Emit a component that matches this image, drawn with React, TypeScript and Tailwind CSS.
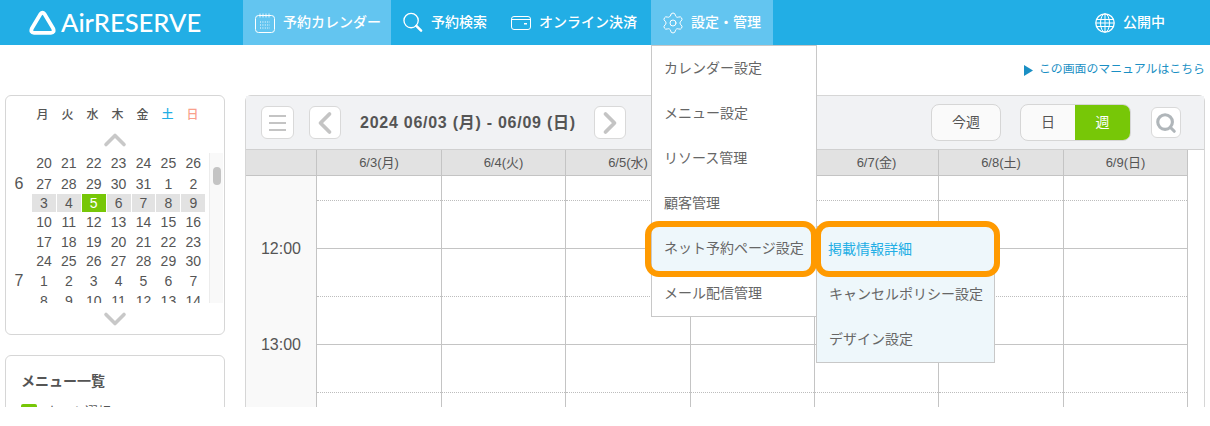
import { ChevronDown, ChevronLeft, ChevronRight, ChevronUp, Search, Settings } from "lucide-react";

const font = "font-['Liberation_Sans','Noto_Sans_CJK_JP',sans-serif]";

const weekDays = [
  { label: "月", color: "text-[#555]" },
  { label: "火", color: "text-[#555]" },
  { label: "水", color: "text-[#555]" },
  { label: "木", color: "text-[#555]" },
  { label: "金", color: "text-[#555]" },
  { label: "土", color: "text-[#22aee5]" },
  { label: "日", color: "text-[#f9a08c]" }
];

const calendarRows = [
  { month: "", h: "h-[20px]", days: [20, 21, 22, 23, 24, 25, 26] },
  { month: "6", h: "h-[21px]", days: [27, 28, 29, 30, 31, 1, 2] },
  { month: "", h: "h-[18px]", days: [3, 4, 5, 6, 7, 8, 9], current: true },
  { month: "", h: "h-[20px]", days: [10, 11, 12, 13, 14, 15, 16] },
  { month: "", h: "h-[19px]", days: [17, 18, 19, 20, 21, 22, 23] },
  { month: "", h: "h-[19px]", days: [24, 25, 26, 27, 28, 29, 30] },
  { month: "7", h: "h-[21px]", days: [1, 2, 3, 4, 5, 6, 7] },
  { month: "", h: "h-[19px]", days: [8, 9, 10, 11, 12, 13, 14] }
];

const columns = [
  { label: "6/3(月)", w: "w-[125px]" },
  { label: "6/4(火)", w: "w-[124px]" },
  { label: "6/5(水)", w: "w-[125px]" },
  { label: "6/6(木)", w: "w-[124px]" },
  { label: "6/7(金)", w: "w-[124px]" },
  { label: "6/8(土)", w: "w-[125px]" },
  { label: "6/9(日)", w: "w-[124px]" }
];

const settingsItems = ["カレンダー設定", "メニュー設定", "リソース管理", "顧客管理", "ネット予約ページ設定", "メール配信管理"];

function CalendarIcon() {
  return (
    <svg width="20" height="20" viewBox="0 0 20 20" fill="none" stroke="white" strokeWidth="1">
      <rect x="0.5" y="2.5" width="19" height="17" rx="3" />
      <path d="M5 0.5v4M8 0.5v4M11 0.5v4M14 0.5v4" strokeWidth="0.8" />
      <path d="M5 9h10M5 12h10M5 15h10" strokeWidth="1.2" strokeDasharray="1 1.4" />
    </svg>
  );
}

function CardIcon() {
  return (
    <svg width="20" height="14" viewBox="0 0 20 14" fill="none" stroke="white" strokeWidth="1">
      <rect x="0.5" y="0.5" width="19" height="13" rx="2.5" />
      <path d="M0.5 3.5h19" />
      <rect x="13" y="7" width="3" height="1.5" fill="white" stroke="none" />
    </svg>
  );
}

function SearchIcon() {
  return (
    <svg width="21" height="21" viewBox="0 0 21 21" fill="none" stroke="white">
      <circle cx="8.5" cy="8.5" r="7.5" strokeWidth="1.4" />
      <path d="M14 14l5 5" strokeWidth="2.6" strokeLinecap="round" />
    </svg>
  );
}

function GlobeIcon() {
  return (
    <svg width="20" height="20" viewBox="0 0 20 20" fill="none" stroke="white" strokeWidth="1">
      <circle cx="10" cy="10" r="9.2" strokeWidth="1.3" />
      <ellipse cx="10" cy="10" rx="4.5" ry="9.2" />
      <path d="M10 1v18M1.5 6.5h17M1 10h18M1.5 13.5h17" />
    </svg>
  );
}

function NavItem({ icon, label, active, className }: { icon: React.ReactNode; label: string; active?: boolean; className: string }) {
  return (
    <div className={`flex h-full items-center ${active ? "bg-[#63c5f0]" : ""} ${className}`}>
      <span className="flex w-5 shrink-0 justify-center">{icon}</span>
      <span className="ml-2 whitespace-nowrap text-[14px] font-medium text-white">{label}</span>
    </div>
  );
}

function ToolButton({ children, className }: { children: React.ReactNode; className: string }) {
  return (
    <div className={`flex items-center justify-center rounded-md border border-[#d9d9d9] bg-white text-[#c4c4c4] ${className}`}>
      {children}
    </div>
  );
}

function MiniCalendar() {
  return (
    <div className="h-[240px] rounded-md border border-[#d6d6d6] bg-white">
      <div className="flex h-[37px] pl-[24px] pt-[11px]">
        {weekDays.map((d) => (
          <span key={d.label} className={`w-[25px] text-center text-[12px] font-medium leading-[16px] ${d.color}`}>
            {d.label}
          </span>
        ))}
      </div>
      <div className="flex h-[20px] items-center justify-center pb-[6px]">
        <ChevronUp size={36} strokeWidth={2.4} className="shrink-0 text-[#c8c8c8]" />
      </div>
      <div className="flex h-[150px] overflow-hidden">
        <div className="w-[203px] shrink-0 overflow-hidden">
          {calendarRows.map((row, i) => (
            <div key={i} className={`flex items-center ${row.h}`}>
              <span className="w-[26px] text-center text-[16px] leading-none text-[#555]">{row.month}</span>
              {row.days.map((day, j) => {
                const today = row.current && day === 5;
                return (
                  <span
                    key={j}
                    className={`mr-px flex h-[18px] w-[23.9px] items-center justify-center text-[14px] leading-none ${
                      today ? "bg-[#77c707] text-white" : row.current ? "bg-[#e2e2e2] text-[#555]" : "text-[#555]"
                    }`}
                  >
                    {day}
                  </span>
                );
              })}
            </div>
          ))}
        </div>
        <div className="w-[14px] border-l border-[#ececec] bg-[#f9f9f9] pl-[3px] pt-[14px]">
          <div className="h-[18px] w-[8px] rounded-[4px] bg-[#c4c4c4]" />
        </div>
      </div>
      <div className="flex justify-center">
        <ChevronDown size={36} strokeWidth={2.4} className="-mt-[2px] shrink-0 text-[#c8c8c8]" />
      </div>
    </div>
  );
}

function Toolbar() {
  return (
    <div className="flex h-[54px] items-center border-b border-[#d0d0d0] bg-[#f1f2f4] pl-[15px] pr-[23px]">
      <ToolButton className="h-[33px] w-[33px] border-[#cfcfcf] bg-[#eeeeee]">
        <div className="flex w-[17px] flex-col gap-[5px]">
          <span className="h-[2px] bg-[#c4c4c4]" />
          <span className="h-[2px] bg-[#c4c4c4]" />
          <span className="h-[2px] bg-[#c4c4c4]" />
        </div>
      </ToolButton>
      <ToolButton className="ml-[15px] h-[33px] w-[32px]">
        <ChevronLeft size={36} strokeWidth={2.5} className="shrink-0" />
      </ToolButton>
      <span className="ml-[19px] w-[214px] whitespace-nowrap text-[16px] font-bold tracking-[0.74px] text-[#555]">
        2024 06/03 (月) - 06/09 (日)
      </span>
      <ToolButton className="ml-[20px] h-[33px] w-[32px]">
        <ChevronRight size={36} strokeWidth={2.5} className="shrink-0" />
      </ToolButton>
      <div className="ml-auto flex h-[37px] w-[70px] items-center justify-center rounded-lg border border-[#d6d6d6] bg-[#fafafa] text-[14px] text-[#555]">
        今週
      </div>
      <div className="ml-[19px] flex h-[37px] w-[111px] overflow-hidden rounded-lg border border-[#d6d6d6] bg-[#fafafa] text-[14px]">
        <span className="flex flex-1 items-center justify-center text-[#555]">日</span>
        <span className="flex w-[55px] items-center justify-center bg-[#77c707] text-white">週</span>
      </div>
      <ToolButton className="ml-[20px] h-[31px] w-[30px]">
        <Search size={22} strokeWidth={3.4} className="text-[#b0b6ba]" />
      </ToolButton>
    </div>
  );
}

function WeekGrid() {
  return (
    <div className="flex">
      <div className="w-[71px] shrink-0 border-r border-[#c4c4c4] bg-[#f9f9f9]">
        <div className="h-[26px] border-b border-[#c4c4c4] bg-[#e2e2e2]" />
        <div className="h-[24px]" />
        <div className="flex h-[96px] items-center justify-center pt-[2px] text-[16px] text-[#555]">12:00</div>
        <div className="flex h-[96px] items-center justify-center pt-[2px] text-[16px] text-[#555]">13:00</div>
      </div>
      {columns.map((col) => (
        <div key={col.label} className={`shrink-0 border-r border-[#c4c4c4] ${col.w}`}>
          <div className="flex h-[26px] items-center justify-center border-b border-[#c4c4c4] bg-[#e2e2e2] text-[13px] text-[#555]">
            {col.label}
          </div>
          <div className="h-[25px] border-b border-dotted border-[#bdbdbd]" />
          <div className="h-[48px] border-b border-[#c4c4c4]" />
          <div className="h-[48px] border-b border-dotted border-[#bdbdbd]" />
          <div className="h-[48px] border-b border-[#c4c4c4]" />
          <div className="h-[48px] border-b border-dotted border-[#bdbdbd]" />
          <div className="h-[48px]" />
        </div>
      ))}
    </div>
  );
}

export default function App() {
  return (
    <div className={`h-[426px] w-[1210px] overflow-hidden bg-white ${font}`}>
      <div className="relative h-[407px] overflow-hidden">
        <header className="flex h-[45px] items-center bg-[#22aee5]">
          <div className="flex w-[243px] items-center pl-[29px]">
            <svg width="27" height="25" viewBox="0 0 27 25" fill="none" stroke="white" strokeWidth="3.8" strokeLinejoin="round">
              <path d="M11.5 4 Q13.5 1.5 15.5 4 L24.2 18.5 Q25.8 22.8 22 22.8 H5 Q1.2 22.8 2.8 18.5 Z" />
            </svg>
            <span className="ml-[5px] whitespace-nowrap font-['Lato',sans-serif] text-[25.6px] font-medium leading-none text-white">
              AirRESERVE
            </span>
          </div>
          <NavItem icon={<CalendarIcon />} label="予約カレンダー" active className="w-[148px] pl-[12px]" />
          <NavItem icon={<SearchIcon />} label="予約検索" className="w-[120px] pl-[12px]" />
          <NavItem icon={<CardIcon />} label="オンライン決済" className="w-[140px]" />
          <NavItem icon={<Settings size={24} strokeWidth={1} color="white" className="shrink-0" />} label="設定・管理" active className="w-[122px] pl-[12px]" />
          <div className="ml-[322px]">
            <NavItem icon={<GlobeIcon />} label="公開中" className="w-[90px]" />
          </div>
        </header>

        <div className="flex h-[50px] items-center justify-end pr-[5px] text-[11.9px] text-[#1a8fc4]">
          <svg width="9" height="11" viewBox="0 0 9 11" className="mr-[6px]" fill="#1a8fc4">
            <path d="M0 0L9 5.5L0 11Z" />
          </svg>
          この画面のマニュアルはこちら
        </div>

        <div className="flex gap-[20px] pl-[5px]">
          <aside className="w-[220px] shrink-0">
            <MiniCalendar />
            <div className="mt-[20px] h-[120px] rounded-md border border-[#d6d6d6] bg-white px-[15px] pt-[15px]">
              <p className="text-[14px] font-bold leading-[20px] text-[#555]">メニュー一覧</p>
              <div className="mt-[11px] flex items-center gap-[9px]">
                <span className="h-[16px] w-[16px] rounded-[2px] bg-[#77c707]" />
                <span className="text-[13px] text-[#555]">カット選択</span>
              </div>
            </div>
          </aside>
          <main className="h-[400px] w-[960px] shrink-0 rounded-t-md border border-[#d6d6d6] bg-white">
            <Toolbar />
            <WeekGrid />
          </main>
        </div>

        {/* 設定・管理 dropdown */}
        <div className="absolute left-[651px] top-[45px] w-[166px] border border-[#c8c8c8] bg-white">
          {settingsItems.map((item, i) => (
            <div key={item} className={`flex h-[45px] items-center whitespace-nowrap pl-[12px] text-[14px] text-[#666] ${i === 4 ? "bg-[#eef7fb]" : ""}`}>
              {item}
            </div>
          ))}
        </div>

        {/* submenu */}
        <div className="absolute left-[816px] top-[226px] w-[179px] border border-[#c8c8c8] bg-[#eef7fb]">
          <div className="flex h-[45px] items-center pl-[11px] text-[14px] text-[#22aee5]">掲載情報詳細</div>
          <div className="flex h-[45px] items-center whitespace-nowrap pl-[12px] text-[14px] text-[#666]">キャンセルポリシー設定</div>
          <div className="flex h-[45px] items-center pl-[12px] text-[14px] text-[#666]">デザイン設定</div>
        </div>

        {/* highlights */}
        <div className="absolute left-[645px] top-[221px] h-[56px] w-[172px] rounded-[14px] border-[6px] border-[#ff9a00]" />
        <div className="absolute left-[815px] top-[221px] h-[56px] w-[185px] rounded-[14px] border-[6px] border-[#ff9a00]" />
      </div>
    </div>
  );
}
